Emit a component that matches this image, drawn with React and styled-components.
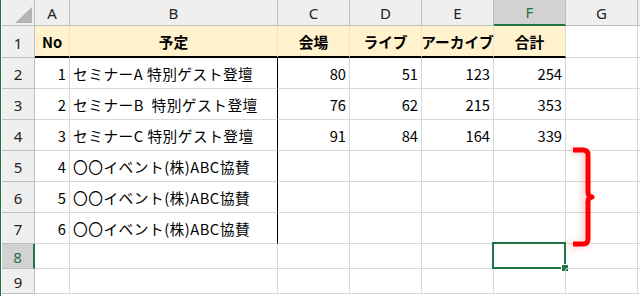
import React from 'react';
import styled, { createGlobalStyle } from 'styled-components';

const GlobalStyle = createGlobalStyle`
    html, body {
        margin: 0;
        padding: 0;
        background: #ffffff;
    }
    body {
        font-family: "Noto Sans CJK JP", "Noto Sans", sans-serif;
    }
`;

const columns = ['A', 'B', 'C', 'D', 'E', 'F', 'G', ''];

const headers = ['No', '予定', '会場', 'ライブ', 'アーカイブ', '合計'];

const rows = [
    { no: 1, title: 'セミナーA 特別ゲスト登壇', values: [80, 51, 123, 254] },
    { no: 2, title: 'セミナーB  特別ゲスト登壇', values: [76, 62, 215, 353] },
    { no: 3, title: 'セミナーC 特別ゲスト登壇', values: [91, 84, 164, 339] },
    { no: 4, title: '〇〇イベント(株)ABC協賛', values: [] },
    { no: 5, title: '〇〇イベント(株)ABC協賛', values: [] },
    { no: 6, title: '〇〇イベント(株)ABC協賛', values: [] },
];

const bracePath = 'M 6 6 H 16 Q 21 6 21 11 V 48 Q 21 53 25 53 Q 21 53 21 58 V 95 Q 21 100 16 100 H 6';

const Brace = () => (
    <BraceSvg width="40" height="112" viewBox="0 0 40 112">
        <defs>
            <filter id="soft" x="-50%" y="-20%" width="200%" height="140%">
                <feGaussianBlur stdDeviation="3" />
            </filter>
        </defs>
        <path
            d={bracePath}
            fill="none" stroke="#ff0000" strokeOpacity="0.18" strokeWidth="6"
            filter="url(#soft)" transform="translate(-3 1)"
        />
        <path d={bracePath} fill="none" stroke="#ff0000" strokeWidth="5" strokeLinejoin="round" />
    </BraceSvg>
);

class App extends React.Component {
    renderRow(row, i) {
        const r = i + 2;
        return (
            <React.Fragment key={r}>
                <RowHeader>{r}</RowHeader>
                <Cell $align="right">{row.no}</Cell>
                <Cell $edge $text>{row.title}</Cell>
                {[0, 1, 2, 3].map(k => (
                    <Cell key={k} $align="right">{row.values[k]}</Cell>
                ))}
                <Cell />
                <Cell />
            </React.Fragment>
        );
    }
    render() {
        return (
            <Window>
                <GlobalStyle />
                <Sheet>
                    <Corner />
                    {columns.map((c, i) => (
                        <ColHeader key={i} $active={c === 'F'}>{c}</ColHeader>
                    ))}

                    <RowHeader>1</RowHeader>
                    {headers.map((h, i) => (
                        <TitleCell key={i} $last={i === headers.length - 1}>{h}</TitleCell>
                    ))}
                    <Cell />
                    <Cell />

                    {rows.map((row, i) => this.renderRow(row, i))}

                    {[8, 9].map(r => (
                        <React.Fragment key={r}>
                            <RowHeader $active={r === 8}>{r}</RowHeader>
                            {columns.map((c, i) => (
                                <Cell key={i}>
                                    {r === 8 && c === 'F' ? <Selection><Handle /></Selection> : null}
                                </Cell>
                            ))}
                        </React.Fragment>
                    ))}
                </Sheet>
                <Brace />
            </Window>
        );
    }
}

export default App;

const Window = styled.div`
    position: relative;
    width: 640px;
    height: 296px;
    box-sizing: border-box;
    border-left: 1px solid #217346;
    padding-left: 1px;
    overflow: hidden;
    background: #ffffff;
`;

const Sheet = styled.div`
    display: grid;
    grid-template-columns: 33px 35px 208px 72px 72px 72px 72px 72px 1fr;
    grid-template-rows: 26px 32px repeat(6, 31px) 25px 25px;
    font-size: 14.7px;
    color: #000000;
`;

const Corner = styled.div`
    position: relative;
    background: #efefef;
    border-right: 1px solid #bfbfbf;
    border-bottom: 1px solid #bfbfbf;

    &::after {
        content: '';
        position: absolute;
        right: 2px;
        bottom: 2px;
        width: 0;
        height: 0;
        border-style: solid;
        border-width: 0 0 16px 17px;
        border-color: transparent transparent #b4b4b4 transparent;
    }
`;

const ColHeader = styled.div`
    display: flex;
    align-items: center;
    justify-content: center;
    background: ${p => p.$active ? '#d2d2d2' : '#efefef'};
    color: ${p => p.$active ? '#217346' : '#222222'};
    border-right: 1px solid #bfbfbf;
    border-bottom: ${p => p.$active ? '2px solid #217346' : '1px solid #bfbfbf'};
    font-family: "Noto Sans", "Open Sans", sans-serif;
    font-size: 15px;
`;

const RowHeader = styled.div`
    display: flex;
    align-items: center;
    justify-content: center;
    background: ${p => p.$active ? '#d2d2d2' : '#efefef'};
    color: ${p => p.$active ? '#217346' : '#222222'};
    border-right: ${p => p.$active ? '2px solid #217346' : '1px solid #bfbfbf'};
    border-bottom: 1px solid #bfbfbf;
    font-family: "Noto Sans", "Open Sans", sans-serif;
    font-size: 15px;
    padding-top: 2px;
    box-sizing: border-box;
`;

const Cell = styled.div`
    position: relative;
    display: flex;
    align-items: center;
    justify-content: ${p => p.$align === 'right' ? 'flex-end' : 'flex-start'};
    padding: 1px 3px 0;
    box-sizing: border-box;
    white-space: pre;
    letter-spacing: ${p => p.$text ? '0.5px' : '0'};
    border-right: 1px solid ${p => p.$edge ? '#000000' : '#d9d9d9'};
    border-bottom: 1px solid #d9d9d9;
`;

const TitleCell = styled.div`
    display: flex;
    align-items: center;
    justify-content: center;
    font-weight: bold;
    white-space: nowrap;
    background: #fff2cc;
    border-right: 1px solid ${p => p.$last ? '#d9d9d9' : '#f3e6c2'};
    border-bottom: 2px solid #000000;
    padding-top: 1px;
    box-sizing: border-box;
`;

const Selection = styled.div`
    position: absolute;
    left: -2px;
    top: -2px;
    right: -1px;
    bottom: -1px;
    border: 2px solid #217346;
`;

const Handle = styled.div`
    position: absolute;
    right: -5px;
    bottom: -5px;
    width: 6px;
    height: 6px;
    background: #217346;
    border: 1px solid #ffffff;
`;

const BraceSvg = styled.svg`
    position: absolute;
    left: 566px;
    top: 144px;
    overflow: visible;
`;
